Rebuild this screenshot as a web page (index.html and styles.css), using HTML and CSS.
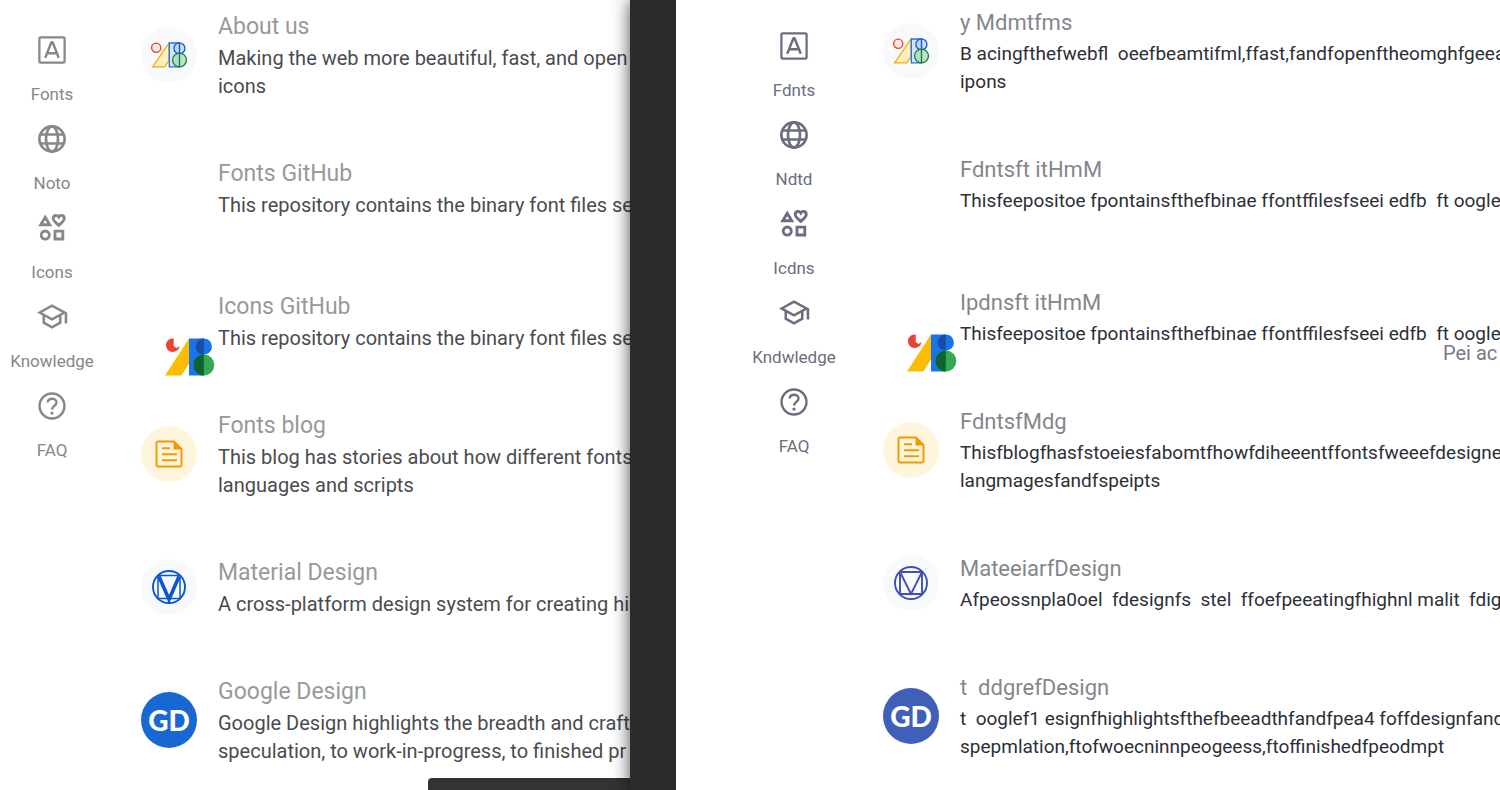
FILE: index.html
```
<!DOCTYPE html>
<html lang="en">

<head>
    <meta charset="UTF-8">
    <meta name="viewport" content="width=device-width, initial-scale=1.0">
    <title>Google Fonts - About</title>
    <link rel="stylesheet" href="styles.css">
</head>

<body>
    <!-- shared icons -->
    <svg class="sprite" aria-hidden="true">
        <symbol id="icon-fonts" viewBox="0 0 24 24">
            <rect x="3.600" y="3.600" width="16.800" height="16.800" rx="1" fill="none" stroke="currentColor" stroke-width="1.500" />
            <path d="M7.500 17.200 11.600 6.800h.8L16.500 17.200M9 14.200h6" fill="none" stroke="currentColor" stroke-width="1.600" stroke-linejoin="bevel" />
        </symbol>
        <symbol id="icon-noto" viewBox="0 0 24 24">
            <g fill="none" stroke="currentColor" stroke-width="1.800">
                <circle cx="12" cy="12" r="8.400" />
                <ellipse cx="12" cy="12" rx="4" ry="8.400" />
                <path d="M4 9h16M4 15h16" />
            </g>
        </symbol>
        <symbol id="icon-icons" viewBox="0 0 24 24">
            <g fill="none" stroke="currentColor" stroke-width="1.900">
                <path d="M4.500 9.800 7.500 4.800l3 5z" />
                <path d="M16.500 10.200c-2.400-2-3.700-3.100-3.700-4.600 0-2.300 2.700-2.600 3.700-.9 1-1.700 3.700-1.400 3.700.9 0 1.500-1.300 2.600-3.700 4.600z" />
                <circle cx="7.500" cy="16.700" r="2.700" />
                <path d="M14 14.100h5.200v5.200H14z" />
            </g>
        </symbol>
        <symbol id="icon-knowledge" viewBox="0 0 24 24">
            <g fill="none" stroke="currentColor" stroke-width="1.700">
                <path d="M3.800 9 12 4.500 20.300 9 12 13.500zM6.500 10.500v5.300l5.500 3.100 5.500-3.100v-5.300M21.300 9v7.300" />
            </g>
        </symbol>
        <symbol id="icon-faq" viewBox="0 0 24 24">
            <circle cx="12" cy="12" r="8.300" fill="none" stroke="currentColor" stroke-width="1.600" />
            <path d="M9.100 9.700c.2-3.300 5.900-3.400 5.900-.1 0 2.100-2.900 2.500-3 4.800" fill="none" stroke="currentColor" stroke-width="1.600" />
            <circle cx="12" cy="16.700" r="1.100" />
        </symbol>
        <symbol id="icon-about" viewBox="0 0 36 26">
            <g stroke-width="1.300">
                <circle cx="5.200" cy="5.700" r="4.600" fill="#fce8e6" stroke="#ea4335" />
                <path d="M1.700 24.800 18 1v17.500l-4.400 6.300z" fill="#feefc3" stroke="#f9ab00" />
                <path d="M18.300 1h10.200v23.800H18.300z" fill="#d2e3fc" stroke="#1a73e8" />
                <circle cx="28.400" cy="6.400" r="5.500" fill="#aecbfa" fill-opacity=".6" stroke="#185abc" />
                <circle cx="28.500" cy="18" r="6.900" fill="#a8dab5" fill-opacity=".7" stroke="#188038" />
                <path d="M28.500 1v10.800" stroke="#185abc" />
                <path d="M28.500 11.200v13.600" stroke="#188038" />
            </g>
        </symbol>
        <symbol id="icon-blog" viewBox="0 0 28 28">
            <path d="M2.500 1.500h16.500l7.500 7.500v16a1.500 1.500 0 0 1-1.500 1.500H3A1.500 1.500 0 0 1 1.500 25V3a1.500 1.500 0 0 1 1.500-1.500z" fill="none" stroke="#f29900" stroke-width="1.900" />
            <path d="M18.500 1v8.500H27zM7 7.300h8v2H7zM7 13.300h15v2H7zM7 19.300h15v2H7z" fill="#f29900" />
        </symbol>
        <symbol id="icon-material" viewBox="0 0 34 34">
            <g fill="none" stroke="#0b57d0">
                <circle cx="17" cy="17" r="16" stroke-width="1.900" />
                <path d="M6 5.500h22v23H6z" stroke-width="1.500" />
                <path d="M7 6.500 17 29.500 27 6.500" stroke-width="3.600" />
            </g>
        </symbol>
        <symbol id="icon-material-thin" viewBox="0 0 34 34">
            <g fill="none" stroke="#4250b4" stroke-width="1.900">
                <circle cx="17" cy="17" r="16" />
                <path d="M6 6h22v22H6zM6 6l11 22L28 6" />
            </g>
        </symbol>
        <symbol id="logo-fonts" viewBox="0 0 50 38">
            <path d="M8.700.5A6.800 6.800 0 1 0 14.500 8L11.500 10 8.700 8z" fill="#ea4335" />
            <path d="M0 37.500 24 .5v25l-7.500 12z" fill="#fbbc04" />
            <path d="M24 .5h14.800v37H24z" fill="#1a73e8" />
            <circle cx="38.800" cy="8.600" r="8.100" fill="#1a73e8" />
            <path d="M38.800.5a8.100 8.100 0 0 0 0 16.200z" fill="#174ea6" />
            <circle cx="38.800" cy="27" r="10.500" fill="#34a853" />
            <path d="M38.800 16.500a10.500 10.500 0 0 0 0 21z" fill="#0d652d" />
        </symbol>
    </svg>

    <main class="compare">
        <section class="pane pane-before">
            <div class="page">
                <nav class="side-nav">
                    <a href="#"><svg><use href="#icon-fonts" /></svg>Fonts</a>
                    <a href="#"><svg><use href="#icon-noto" /></svg>Noto</a>
                    <a href="#"><svg><use href="#icon-icons" /></svg>Icons</a>
                    <a href="#"><svg><use href="#icon-knowledge" /></svg>Knowledge</a>
                    <a href="#"><svg><use href="#icon-faq" /></svg>FAQ</a>
                </nav>
                <div class="links">
                    <article class="item">
                        <div class="badge badge-light"><svg class="about"><use href="#icon-about" /></svg></div>
                        <div class="text">
                            <h2>About us</h2>
                            <p>Making the web more beautiful, fast, and open<br>icons</p>
                        </div>
                    </article>
                    <article class="item item-tall">
                        <div class="badge"></div>
                        <div class="text">
                            <h2>Fonts GitHub</h2>
                            <p>This repository contains the binary font files se</p>
                        </div>
                    </article>
                    <article class="item">
                        <div class="badge"></div>
                        <div class="text">
                            <h2>Icons GitHub</h2>
                            <p>This repository contains the binary font files se</p>
                        </div>
                    </article>
                    <article class="item">
                        <div class="badge badge-yellow"><svg class="blog"><use href="#icon-blog" /></svg></div>
                        <div class="text">
                            <h2>Fonts blog</h2>
                            <p>This blog has stories about how different fonts<br>languages and scripts</p>
                        </div>
                    </article>
                    <article class="item">
                        <div class="badge badge-light"><svg class="material"><use href="#icon-material" /></svg></div>
                        <div class="text">
                            <h2>Material Design</h2>
                            <p>A cross-platform design system for creating hig</p>
                        </div>
                    </article>
                    <article class="item">
                        <div class="badge badge-blue">GD</div>
                        <div class="text">
                            <h2>Google Design</h2>
                            <p>Google Design highlights the breadth and craft<br>speculation, to work-in-progress, to finished pr</p>
                        </div>
                    </article>
                </div>
                <footer class="footer">
                    <svg><use href="#logo-fonts" /></svg>
                </footer>
            </div>
            <div class="toast"></div>
        </section>

        <div class="divider"></div>

        <section class="pane pane-after">
            <div class="page">
                <nav class="side-nav">
                    <a href="#"><svg><use href="#icon-fonts" /></svg>Fdnts</a>
                    <a href="#"><svg><use href="#icon-noto" /></svg>Ndtd</a>
                    <a href="#"><svg><use href="#icon-icons" /></svg>Icdns</a>
                    <a href="#"><svg><use href="#icon-knowledge" /></svg>Kndwledge</a>
                    <a href="#"><svg><use href="#icon-faq" /></svg>FAQ</a>
                </nav>
                <div class="links">
                    <article class="item">
                        <div class="badge badge-light"><svg class="about"><use href="#icon-about" /></svg></div>
                        <div class="text">
                            <h2>y Mdmtfms</h2>
                            <p>B acingfthefwebfl  oeefbeamtifml,ffast,fandfopenftheomghfgeeatf<br>ipons</p>
                        </div>
                    </article>
                    <article class="item item-tall">
                        <div class="badge"></div>
                        <div class="text">
                            <h2>Fdntsft itHmM</h2>
                            <p>Thisfeepositoe fpontainsfthefbinae ffontffilesfseei edfb  ft oogle</p>
                        </div>
                    </article>
                    <article class="item">
                        <div class="badge"></div>
                        <div class="text">
                            <h2>Ipdnsft itHmM</h2>
                            <p>Thisfeepositoe fpontainsfthefbinae ffontffilesfseei edfb  ft oogle</p>
                        </div>
                    </article>
                    <article class="item">
                        <div class="badge badge-yellow"><svg class="blog"><use href="#icon-blog" /></svg></div>
                        <div class="text">
                            <h2>FdntsfMdg</h2>
                            <p>Thisfblogfhasfstoeiesfabomtfhowfdiheeentffontsfweeefdesigned<br>langmagesfandfspeipts</p>
                        </div>
                    </article>
                    <article class="item">
                        <div class="badge badge-light"><svg class="material"><use href="#icon-material-thin" /></svg></div>
                        <div class="text">
                            <h2>MateeiarfDesign</h2>
                            <p>Afpeossnpla0oel  fdesignfs  stel  ffoefpeeatingfhighnl malit  fdigit</p>
                        </div>
                    </article>
                    <article class="item">
                        <div class="badge badge-blue">GD</div>
                        <div class="text">
                            <h2>t  ddgrefDesign</h2>
                            <p>t  ooglef1 esignfhighlightsfthefbeeadthfandfpea4 foffdesignfandf<br>spepmlation,ftofwoecninnpeogeess,ftoffinishedfpeodmpt</p>
                        </div>
                    </article>
                </div>
                <footer class="footer">
                    <svg><use href="#logo-fonts" /></svg>
                    <a href="#">Pei ac</a>
                </footer>
            </div>
        </section>
    </main>
</body>

</html>
```
FILE: styles.css
```
* {
    box-sizing: border-box;
}

body {
    margin: 0;
    background: #ffffff;
    font-family: Roboto, sans-serif;
    color: #494c50;
}

.sprite {
    display: none;
}

svg {
    display: block;
    fill: currentColor;
}

.compare {
    display: flex;
    height: 100vh;
    overflow: hidden;
}

.pane {
    position: relative;
    overflow: hidden;
    min-width: 0;
}

.pane-before {
    width: 42%;
    padding-top: 10px;
}

.pane-after {
    flex: 1;
    padding: 6px 0 0 66px;
    color: #2c2f38;
}

/* dark bar between the two pages, its shadow falls on the left one */
.divider {
    position: relative;
    flex: 0 0 46px;
    background: #2b2b2b;
    box-shadow: 0 0 18px rgba(0, 0, 0, 0.7);
    clip-path: inset(0 0 0 -24px);
}

.page {
    position: relative;
    display: flex;
}

/* Navigation */

.side-nav {
    flex: 0 0 104px;
    display: flex;
    flex-direction: column;
    gap: 15px;
    padding-top: 22px;
}

.side-nav a {
    display: flex;
    flex-direction: column;
    align-items: center;
    gap: 14px;
    font-size: 17px;
    line-height: 24px;
    color: #85878b;
    text-decoration: none;
}

.side-nav svg {
    width: 36px;
    height: 36px;
}

.pane-after .side-nav a {
    color: #6b6d80;
}

/* List of links */

.links {
    flex: 1;
    min-width: 0;
    display: flex;
    flex-direction: column;
    gap: 57px;
    padding-left: 37px;
}

.item {
    display: flex;
    align-items: center;
    gap: 21px;
}

.item-tall {
    align-items: flex-start;
    min-height: 76px;
}

.badge {
    flex: 0 0 56px;
    height: 56px;
    display: flex;
    align-items: center;
    justify-content: center;
    border-radius: 50%;
}

.badge-light {
    background: #f8f9fb;
}

.badge-yellow {
    background: #fef5dc;
}

.badge-blue {
    background: #1967d2;
    color: #ffffff;
    font-family: Lato, sans-serif;
    font-size: 28px;
    font-weight: 900;
}

.pane-after .badge-blue {
    background: #3f5fb8;
}

.about {
    width: 36px;
    height: 26px;
}

.blog {
    width: 28px;
    height: 28px;
}

.material {
    width: 34px;
    height: 34px;
}

.text h2 {
    margin: 0;
    font-size: 23px;
    font-weight: 400;
    line-height: 34px;
    color: #999999;
    white-space: pre;
}

.text p {
    margin: 0;
    font-size: 20px;
    line-height: 28px;
    white-space: pre;
}

.pane-after .text h2 {
    font-size: 22px;
    color: #85868c;
}

.pane-after .text p {
    font-size: 19px;
}

/* Floating parts */

.footer {
    position: absolute;
    top: 328px;
    left: 165px;
    right: 0;
    display: flex;
    justify-content: space-between;
}

.footer svg {
    width: 50px;
    height: 38px;
}

.footer a {
    width: 57px;
    padding-top: 7px;
    font-size: 20px;
    line-height: 24px;
    color: #77798a;
    text-decoration: none;
    white-space: nowrap;
}

.toast {
    position: absolute;
    left: 68%;
    right: 0;
    bottom: 0;
    height: 12px;
    background: #333333;
    border-radius: 4px 0 0 0;
}
```
